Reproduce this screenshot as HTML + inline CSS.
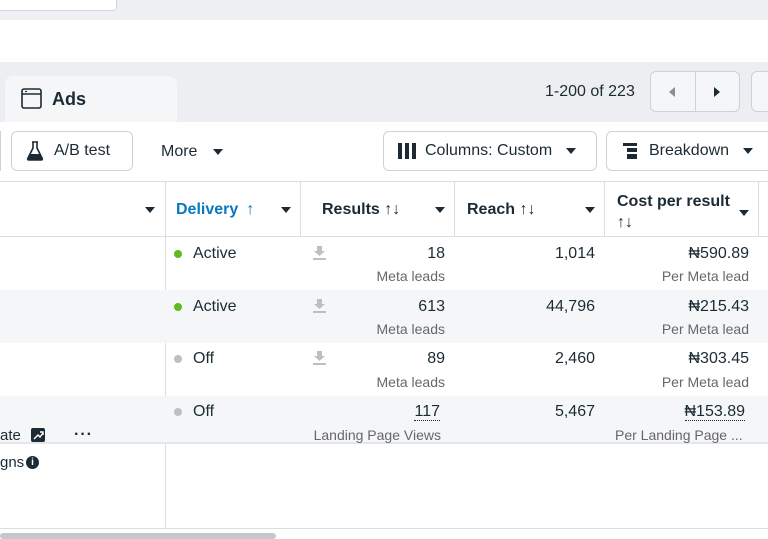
<!DOCTYPE html>
<html><head><style>
*{margin:0;padding:0;box-sizing:border-box}
body{width:768px;height:538px;overflow:hidden;background:#fff;font-family:"Liberation Sans",sans-serif;color:#1c2b33;position:relative}
.a{position:absolute}
.btn{position:absolute;border:1px solid #cbd2d9;border-radius:6px;background:#fff;display:flex;align-items:center;font-size:16px;color:#1c2b33}
.tri{display:inline-block;width:0;height:0;border-left:5px solid transparent;border-right:5px solid transparent;border-top:6px solid #1c2b33}
.h{position:absolute;top:182px;height:55px;font-size:16px;font-weight:bold;display:flex;align-items:center}
.t{font-size:16px;position:absolute}
.s{font-size:14px;color:#65676b;position:absolute}
.dot{position:absolute;width:8px;height:8px;border-radius:50%}
</style></head><body>
<div class="a" style="left:0;top:0;width:768px;height:20px;background:#eef0f3"></div>
<div class="a" style="left:0;top:0;width:117px;height:11px;background:#fff;border:1px solid #d3d7db;border-top:none;border-left:none;border-radius:0 0 4px 0"></div>
<div class="a" style="left:0;top:62px;width:768px;height:60px;background:#eceef1"></div>
<div class="a" style="left:5px;top:76px;width:172px;height:46px;background:#f5f6f8;border-radius:8px 8px 0 0"></div>
<svg class="a" style="left:21px;top:88px" width="21" height="21" viewBox="0 0 21 21"><rect x="1" y="1" width="19" height="19" rx="2" fill="none" stroke="#1c2b33" stroke-width="1.6"/><line x1="1" y1="6" x2="20" y2="6" stroke="#1c2b33" stroke-width="1.4"/><line x1="4" y1="3.5" x2="6" y2="3.5" stroke="#1c2b33" stroke-width="1.2"/></svg>
<div class="a" style="left:52px;top:89px;font-size:18px;font-weight:bold">Ads</div>
<div class="a" style="left:545px;top:83px;font-size:16px">1-200 of 223</div>
<div class="a" style="left:650px;top:71px;width:90px;height:41px;border:1px solid #cbd2d9;border-radius:6px;background:#f5f6f7"></div>
<div class="a" style="left:695px;top:71px;width:1px;height:41px;background:#cbd2d9"></div>
<div class="a" style="left:669px;top:87px;border-top:5px solid transparent;border-bottom:5px solid transparent;border-right:6px solid #8a8d91"></div>
<div class="a" style="left:714px;top:87px;border-top:5px solid transparent;border-bottom:5px solid transparent;border-left:6px solid #1c2b33"></div>
<div class="a" style="left:751px;top:71px;width:30px;height:41px;border:1px solid #cbd2d9;border-radius:6px;background:#f5f6f7"></div>

<div class="a" style="left:0;top:131px;width:1px;height:40px;background:#cbd2d9"></div>
<div class="btn" style="left:11px;top:131px;width:122px;height:40px;padding-left:14px"><svg width="18" height="20" viewBox="0 0 18 20" style="margin-right:10px"><path d="M6 1h6M7 1v6L2 17q-1 2 1 2h12q2 0 1-2L11 7V1" fill="none" stroke="#1c2b33" stroke-width="1.6"/><path d="M4 13h10l2 4q0 2-1 2H3q-2 0-1-2z" fill="#1c2b33"/></svg>A/B test</div>
<div class="a" style="left:161px;top:143px;font-size:16px">More</div><span class="tri a" style="left:213px;top:149px"></span>
<div class="btn" style="left:383px;top:131px;width:214px;height:40px;padding-left:14px"><svg width="18" height="16" style="margin-right:9px"><rect x="0" y="0" width="4" height="16" fill="#1c2b33"/><rect x="7" y="0" width="4" height="16" fill="#1c2b33"/><rect x="14" y="0" width="4" height="16" fill="#1c2b33"/></svg>Columns: Custom<span class="tri" style="margin-left:14px"></span></div>
<div class="btn" style="left:606px;top:131px;width:170px;height:40px;padding-left:16px"><svg width="14" height="16" style="margin-right:12px"><rect x="0" y="0" width="14" height="3" fill="#1c2b33"/><rect x="4" y="5" width="10" height="4" fill="#1c2b33"/><rect x="4" y="11" width="10" height="5" fill="#1c2b33"/></svg>Breakdown<span class="tri" style="margin-left:14px"></span></div>

<div class="a" style="left:0;top:181px;width:768px;height:1px;background:#dadde1"></div>
<div class="a" style="left:0;top:236px;width:768px;height:1px;background:#dadde1"></div>
<div class="a" style="left:165px;top:182px;width:1px;height:347px;background:#dadde1"></div>
<div class="a" style="left:300px;top:182px;width:1px;height:55px;background:#dadde1"></div>
<div class="a" style="left:454px;top:182px;width:1px;height:55px;background:#dadde1"></div>
<div class="a" style="left:604px;top:182px;width:1px;height:55px;background:#dadde1"></div>
<div class="a" style="left:758px;top:182px;width:1px;height:55px;background:#dadde1"></div>
<span class="tri a" style="left:145px;top:207px"></span>
<div class="h" style="left:176px;color:#0a78be">Delivery <span style="font-weight:normal;margin-left:8px">↑</span></div><span class="tri a" style="left:281px;top:207px"></span>
<div class="h" style="left:322px">Results ↑↓</div><span class="tri a" style="left:435px;top:207px"></span>
<div class="h" style="left:467px">Reach ↑↓</div><span class="tri a" style="left:585px;top:207px"></span>
<div class="a" style="left:617px;top:191px;font-size:16px;font-weight:bold;line-height:21px">Cost per result<br><span style="font-weight:normal">↑↓</span></div><span class="tri a" style="left:739px;top:210px"></span>

<div class="a" style="left:0;top:290px;width:768px;height:53px;background:#f5f6f7"></div>
<div class="a" style="left:0;top:396px;width:768px;height:46px;background:#f5f6f7"></div>
<div class="a" style="left:0;top:442px;width:768px;height:2px;background:#e4e6e9"></div>

<div class="dot" style="left:174px;top:250px;background:#5fba1f"></div><div class="t" style="left:193px;top:245px">Active</div>
<div class="dot" style="left:174px;top:303px;background:#5fba1f"></div><div class="t" style="left:193px;top:298px">Active</div>
<div class="dot" style="left:174px;top:355px;background:#bcc0c4"></div><div class="t" style="left:193px;top:350px">Off</div>
<div class="dot" style="left:174px;top:408px;background:#bcc0c4"></div><div class="t" style="left:193px;top:403px">Off</div>
<svg class="a" style="left:313px;top:246px" width="13" height="14"><path d="M4 0h5v5h3L6.5 10 1 5h3z M0 12h13v2H0z" fill="#bcc0c4"/></svg>
<svg class="a" style="left:313px;top:299px" width="13" height="14"><path d="M4 0h5v5h3L6.5 10 1 5h3z M0 12h13v2H0z" fill="#bcc0c4"/></svg>
<svg class="a" style="left:313px;top:351px" width="13" height="14"><path d="M4 0h5v5h3L6.5 10 1 5h3z M0 12h13v2H0z" fill="#bcc0c4"/></svg>

<div class="t" style="right:323px;top:245px">18</div><div class="s" style="right:323px;top:268px">Meta leads</div>
<div class="t" style="right:323px;top:298px">613</div><div class="s" style="right:323px;top:321px">Meta leads</div>
<div class="t" style="right:323px;top:350px">89</div><div class="s" style="right:323px;top:374px">Meta leads</div>
<div class="t" style="right:328px;top:403px;border-bottom:1px dotted #1c2b33;line-height:17px">117</div><div class="s" style="right:327px;top:427px">Landing Page Views</div>
<div class="t" style="right:173px;top:245px">1,014</div>
<div class="t" style="right:173px;top:298px">44,796</div>
<div class="t" style="right:173px;top:350px">2,460</div>
<div class="t" style="right:173px;top:403px">5,467</div>
<div class="t" style="right:19px;top:245px">₦590.89</div><div class="s" style="right:19px;top:268px">Per Meta lead</div>
<div class="t" style="right:19px;top:298px">₦215.43</div><div class="s" style="right:19px;top:321px">Per Meta lead</div>
<div class="t" style="right:19px;top:350px">₦303.45</div><div class="s" style="right:19px;top:374px">Per Meta lead</div>
<div class="t" style="right:23px;top:403px;border-bottom:1px dotted #1c2b33;line-height:17px">₦153.89</div><div class="s" style="left:615px;top:427px">Per Landing Page ...</div>

<div class="t" style="left:0;top:427px;font-size:15px">ate</div>
<div class="a" style="left:31px;top:428px;width:14px;height:14px;background:#1c2b33;border-radius:2px"><svg width="14" height="14"><path d="M3 11l4-4 2 2 3-4M9 4h3v3" stroke="#fff" fill="none" stroke-width="1.4"/></svg></div>
<div class="a" style="left:74px;top:426px;font-size:16px;font-weight:bold;letter-spacing:1px">···</div>
<div class="t" style="left:0;top:454px;font-size:15px">gns</div>
<div class="a" style="left:26px;top:456px;width:13px;height:13px;border-radius:50%;background:#1c2b33;color:#fff;font-size:10px;font-weight:bold;text-align:center;line-height:13px">i</div>

<div class="a" style="left:0;top:528px;width:768px;height:1px;background:#dadde1"></div>
<div class="a" style="left:0;top:533px;width:276px;height:6px;background:#c4c7cb;border-radius:3px"></div>
</body></html>
